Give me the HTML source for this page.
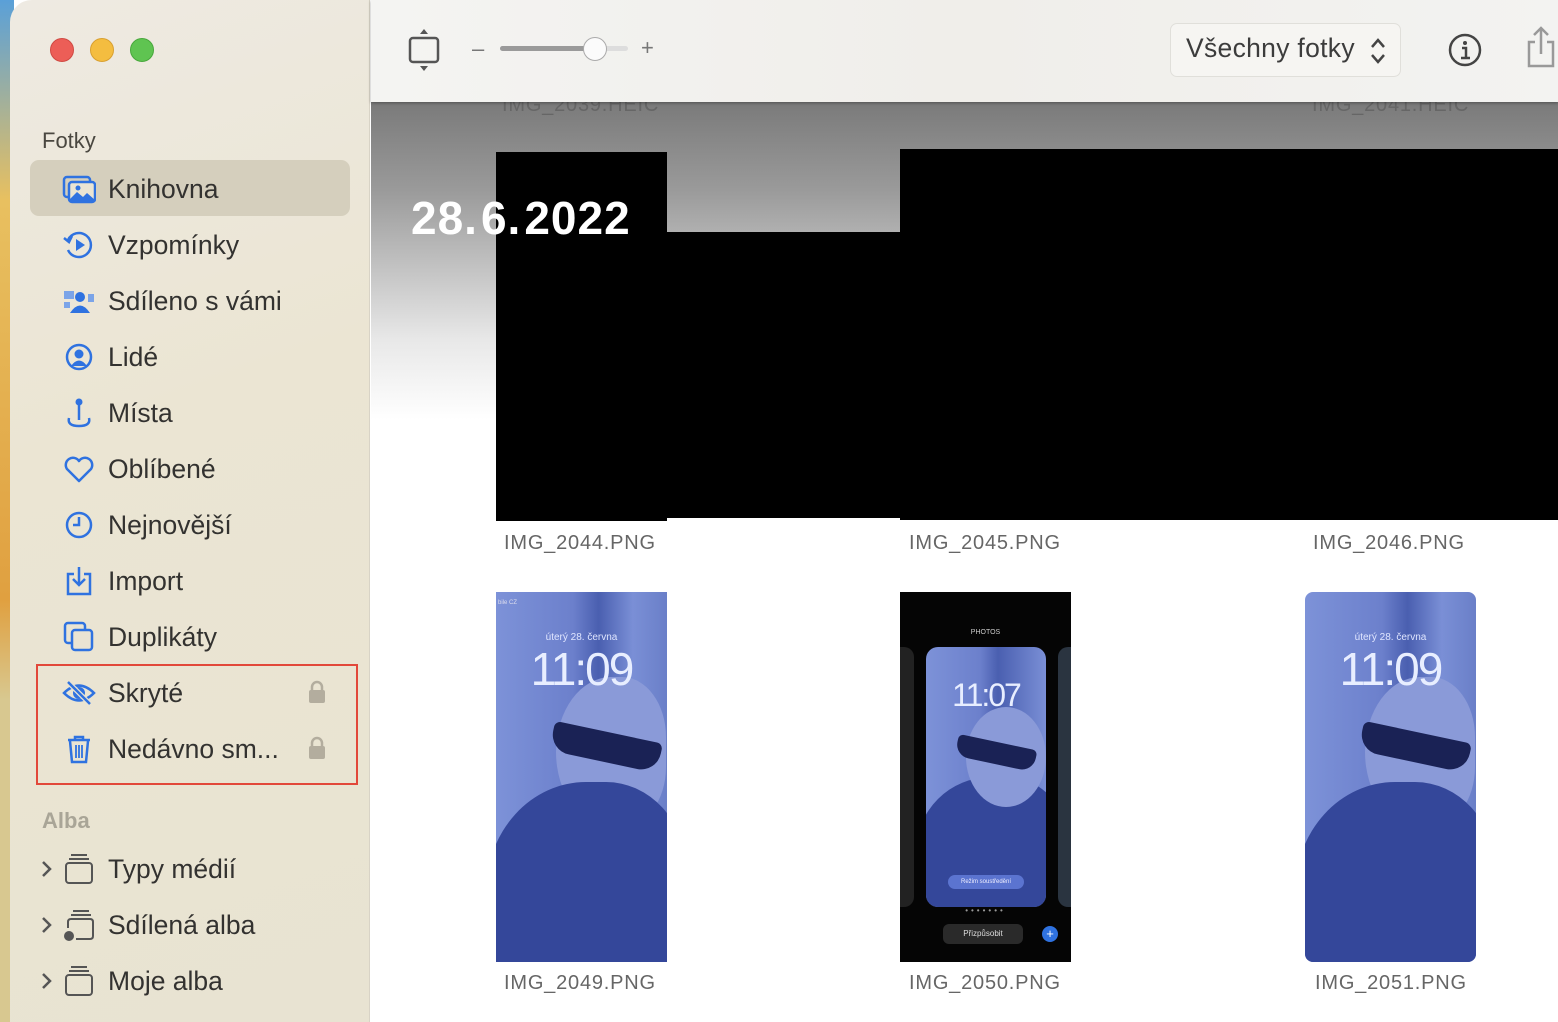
<!DOCTYPE html>
<html><head><meta charset="utf-8">
<style>
*{margin:0;padding:0;box-sizing:border-box}
body{width:1558px;height:1022px;overflow:hidden;background:#fff;font-family:"Liberation Sans",sans-serif;position:relative}
.desk{position:absolute;left:0;top:0;width:14px;height:1022px;background:linear-gradient(#5aa0d8 0,#e8c060 200px,#e0a040 600px,#d8c890 700px,#d8c890 1022px)}
.side{position:absolute;left:10px;top:0;width:360px;height:1022px;background:linear-gradient(160deg,#eeeae2,#ebe5d3 40%,#e8e3d2);border-radius:22px 0 0 0;border-right:1px solid #d8d3c6}
.dot{position:absolute;top:38px;width:24px;height:24px;border-radius:50%}
.hd{position:absolute;left:42px;font-size:22px;color:#4a4740}
.it{position:absolute;left:108px;font-size:26.5px;color:#333230;line-height:30px}
.ic{position:absolute;left:62px;width:34px;height:34px}
.sel{position:absolute;left:30px;top:160px;width:320px;height:56px;background:#d5cfbd;border-radius:9px}
.lock{position:absolute;left:308px;width:18px;height:24px}
.main{position:absolute;left:371px;top:0;width:1187px;height:1022px;background:linear-gradient(#7a7a7a 102px,#9a9a9a 190px,#b4b4b4 240px,#e8e8e8 340px,#fff 420px)}
.tb{position:absolute;left:371px;top:0;width:1187px;height:102px;background:linear-gradient(90deg,#f4f4f2,#f0eeea 50%,#f3f3f1);box-shadow:0 1px 3px rgba(0,0,0,.35)}
.blk{position:absolute;background:#000}
.lab{position:absolute;font-size:20px;color:#666;letter-spacing:.8px}
.wp{position:absolute;top:592px;width:171px;height:370px;overflow:hidden;background:linear-gradient(90deg,#7d92d8 0,#6c80cc 45%,#4a5fb0 60%,#7a8fd6 80%,#6a7fc8)}
.wp .clk{position:absolute;left:0;width:100%;text-align:center;color:#e8eeff;font-size:46px;top:50px;letter-spacing:-2px}
.wp .dt{position:absolute;left:0;width:100%;text-align:center;color:#e0e6ff;font-size:10px;top:40px}
.wp .body{position:absolute;left:-10px;top:190px;width:200px;height:220px;background:#34479a;border-radius:50% 40% 0 0}
.wp .head{position:absolute;left:60px;top:85px;width:110px;height:150px;background:#8a9ad8;border-radius:50% 40% 40% 50%}
.wp .glass{position:absolute;left:55px;top:140px;width:110px;height:30px;background:#1a2255;border-radius:6px 6px 20px 20px;transform:rotate(12deg)}
</style></head><body>
<div class="desk"></div>
<div class="side">
<div class="dot" style="left:40px;background:#ec5e57;border:1px solid #d04a43"></div>
<div class="dot" style="left:80px;background:#f4bd40;border:1px solid #d9a030"></div>
<div class="dot" style="left:120px;background:#5fc451;border:1px solid #48a83c"></div>
</div>
<div class="sel"></div>
<div class="hd" style="top:128px">Fotky</div>
<svg class="ic" style="top:172px" viewBox="0 0 34 34"><rect x="2" y="5" width="26" height="20" rx="3" fill="none" stroke="#2f72e0" stroke-width="2.5"/><rect x="7" y="10" width="26" height="20" rx="3" fill="#eae4d3" stroke="#2f72e0" stroke-width="2.5"/><path d="M7 28 L15 20 L21 25 L25 21 L33 28 L33 30 L7 30Z" fill="#2f72e0"/><circle cx="16" cy="16" r="2.5" fill="#2f72e0"/></svg>
<svg class="ic" style="top:228px" viewBox="0 0 34 34"><path d="M6 12 A12 12 0 1 1 6 22" fill="none" stroke="#2f72e0" stroke-width="2.5"/><path d="M2 10 L7 14 L10 8" fill="none" stroke="#2f72e0" stroke-width="2.5"/><path d="M14 11 L23 17 L14 23Z" fill="#2f72e0"/></svg>
<svg class="ic" style="top:284px" viewBox="0 0 34 34"><rect x="2" y="7" width="10" height="8" fill="#7ba4e8"/><rect x="2" y="18" width="6" height="6" fill="#7ba4e8"/><rect x="26" y="10" width="6" height="8" fill="#7ba4e8"/><circle cx="18" cy="13" r="5" fill="#2f72e0"/><path d="M8 29 Q18 14 28 29Z" fill="#2f72e0"/></svg>
<svg class="ic" style="top:340px" viewBox="0 0 34 34"><circle cx="17" cy="17" r="12" fill="none" stroke="#2f72e0" stroke-width="2.5"/><circle cx="17" cy="14" r="4.5" fill="#2f72e0"/><path d="M9 26 Q17 15 25 26Z" fill="#2f72e0"/></svg>
<svg class="ic" style="top:396px" viewBox="0 0 34 34"><circle cx="17" cy="6" r="3.5" fill="#2f72e0"/><path d="M17 9 V24" stroke="#2f72e0" stroke-width="2.5"/><path d="M7 22 Q5 30 17 30 Q29 30 27 22" fill="none" stroke="#2f72e0" stroke-width="2.5"/></svg>
<svg class="ic" style="top:452px" viewBox="0 0 34 34"><path d="M17 29 L5 17 A6.5 6.5 0 0 1 17 9 A6.5 6.5 0 0 1 29 17Z" fill="none" stroke="#2f72e0" stroke-width="2.5" stroke-linejoin="round"/></svg>
<svg class="ic" style="top:508px" viewBox="0 0 34 34"><circle cx="17" cy="17" r="12" fill="none" stroke="#2f72e0" stroke-width="2.5"/><path d="M17 9 V17 H11" fill="none" stroke="#2f72e0" stroke-width="2.5"/></svg>
<svg class="ic" style="top:564px" viewBox="0 0 34 34"><path d="M12 10 H6 V30 H28 V10 H22" fill="none" stroke="#2f72e0" stroke-width="2.5"/><path d="M17 3 V21 M11 15 L17 21 L23 15" fill="none" stroke="#2f72e0" stroke-width="2.5"/></svg>
<svg class="ic" style="top:620px" viewBox="0 0 34 34"><rect x="3" y="3" width="20" height="20" rx="3" fill="none" stroke="#2f72e0" stroke-width="2.5"/><rect x="10" y="10" width="20" height="20" rx="3" fill="#eae4d3" stroke="#2f72e0" stroke-width="2.5"/></svg>
<svg class="ic" style="top:676px" viewBox="0 0 34 34"><path d="M2 17 Q17 2 32 17 Q17 32 2 17Z" fill="none" stroke="#2f72e0" stroke-width="2.5"/><circle cx="17" cy="17" r="6" fill="#2f72e0"/><path d="M6 6 L28 28" stroke="#eae4d3" stroke-width="5"/><path d="M6 6 L28 28" stroke="#2f72e0" stroke-width="2.5"/></svg>
<svg class="ic" style="top:732px" viewBox="0 0 34 34"><path d="M6 8 H28 M13 8 V5 H21 V8" fill="none" stroke="#2f72e0" stroke-width="2.5"/><path d="M8 9 L10 30 H24 L26 9" fill="none" stroke="#2f72e0" stroke-width="2.5"/><path d="M14 13 V26 M17 13 V26 M20 13 V26" stroke="#2f72e0" stroke-width="1.8"/></svg>
<div class="it" style="top:174px">Knihovna</div>
<div class="it" style="top:230px">Vzpomínky</div>
<div class="it" style="top:286px">Sdíleno s vámi</div>
<div class="it" style="top:342px">Lidé</div>
<div class="it" style="top:398px">Místa</div>
<div class="it" style="top:454px">Oblíbené</div>
<div class="it" style="top:510px">Nejnovější</div>
<div class="it" style="top:566px">Import</div>
<div class="it" style="top:622px">Duplikáty</div>
<div class="it" style="top:678px">Skryté</div>
<div class="it" style="top:734px">Nedávno sm...</div>
<svg class="lock" style="top:680px" viewBox="0 0 18 24"><path d="M4 11 V7 A5 5 0 0 1 14 7 V11" fill="none" stroke="#b3ad9e" stroke-width="2.5"/><rect x="1" y="10" width="16" height="13" rx="2" fill="#b3ad9e"/></svg>
<svg class="lock" style="top:736px" viewBox="0 0 18 24"><path d="M4 11 V7 A5 5 0 0 1 14 7 V11" fill="none" stroke="#b3ad9e" stroke-width="2.5"/><rect x="1" y="10" width="16" height="13" rx="2" fill="#b3ad9e"/></svg>
<div style="position:absolute;left:36px;top:664px;width:322px;height:121px;border:2px solid #e2483a"></div>
<div class="hd" style="top:808px;color:#a9a597;font-weight:bold">Alba</div>
<svg style="position:absolute;left:40px;top:858px" width="14" height="22" viewBox="0 0 14 22"><path d="M3 4 L10 11 L3 18" fill="none" stroke="#555" stroke-width="2.5"/></svg>
<svg style="position:absolute;left:40px;top:914px" width="14" height="22" viewBox="0 0 14 22"><path d="M3 4 L10 11 L3 18" fill="none" stroke="#555" stroke-width="2.5"/></svg>
<svg style="position:absolute;left:40px;top:970px" width="14" height="22" viewBox="0 0 14 22"><path d="M3 4 L10 11 L3 18" fill="none" stroke="#555" stroke-width="2.5"/></svg>
<svg class="ic" style="top:852px" viewBox="0 0 34 34"><path d="M9 3 H25 M7 7 H27" stroke="#555" stroke-width="2"/><rect x="4" y="11" width="26" height="20" rx="3" fill="none" stroke="#555" stroke-width="2"/></svg>
<svg class="ic" style="top:908px" viewBox="0 0 34 34"><path d="M11 3 H27 M9 7 H29" stroke="#555" stroke-width="2"/><path d="M6 20 V14 Q6 11 9 11 H28 Q31 11 31 14 V28 Q31 31 28 31 H14" fill="none" stroke="#555" stroke-width="2"/><circle cx="7" cy="28" r="5" fill="#555"/></svg>
<svg class="ic" style="top:964px" viewBox="0 0 34 34"><path d="M9 3 H25 M7 7 H27" stroke="#555" stroke-width="2"/><rect x="4" y="11" width="26" height="20" rx="3" fill="none" stroke="#555" stroke-width="2"/></svg>
<div class="it" style="top:854px">Typy médií</div>
<div class="it" style="top:910px">Sdílená alba</div>
<div class="it" style="top:966px">Moje alba</div>

<div class="main"></div>
<div class="lab" style="left:502px;top:94px">IMG_2039.HEIC</div>
<div class="lab" style="left:1312px;top:94px">IMG_2041.HEIC</div>
<div class="blk" style="left:496px;top:152px;width:171px;height:369px"></div>
<div class="blk" style="left:667px;top:232px;width:234px;height:286px"></div>
<div class="blk" style="left:900px;top:149px;width:658px;height:371px"></div>
<div style="position:absolute;left:411px;top:191px;font-size:46px;font-weight:bold;color:#fff;letter-spacing:1px">28.<span style="margin-left:3px"></span>6.<span style="margin-left:3px"></span>2022</div>
<div class="lab" style="left:504px;top:532px">IMG_2044.PNG</div>
<div class="lab" style="left:909px;top:532px">IMG_2045.PNG</div>
<div class="lab" style="left:1313px;top:532px">IMG_2046.PNG</div>

<div class="wp" style="left:496px"><div class="head"></div><div class="body"></div><div class="glass"></div><div class="dt">úterý 28. června</div><div class="clk">11:09</div><div style="position:absolute;left:2px;top:8px;font-size:6px;color:#dde">bile CZ</div></div>
<div class="wp" style="left:900px;background:#050505">
 <div style="position:absolute;left:-10px;top:55px;width:24px;height:260px;border-radius:10px;background:#222"></div>
 <div style="position:absolute;left:158px;top:55px;width:24px;height:260px;border-radius:10px;background:#2a3440"></div>
 <div style="position:absolute;left:26px;top:55px;width:120px;height:260px;border-radius:12px;overflow:hidden;background:linear-gradient(90deg,#7d92d8,#6c80cc 45%,#4a5fb0 60%,#7a8fd6)">
  <div style="position:absolute;left:-10px;top:130px;width:150px;height:150px;background:#34479a;border-radius:50% 40% 0 0"></div>
  <div style="position:absolute;left:40px;top:60px;width:80px;height:100px;background:#8a9ad8;border-radius:50%"></div>
  <div style="position:absolute;left:30px;top:95px;width:80px;height:22px;background:#1a2255;border-radius:5px 5px 14px 14px;transform:rotate(12deg)"></div>
  <div style="position:absolute;left:0;width:100%;text-align:center;top:30px;color:#e8eeff;font-size:32px;letter-spacing:-2px">11:07</div>
  <div style="position:absolute;left:22px;top:228px;width:76px;height:14px;border-radius:7px;background:#5b74d0;color:#eef;font-size:6px;text-align:center;line-height:14px">Režim soustředění</div>
 </div>
 <div style="position:absolute;left:0;width:100%;text-align:center;top:37px;color:#ccc;font-size:7px">PHOTOS</div>
 <div style="position:absolute;left:0;width:100%;text-align:center;top:314px;color:#999;font-size:8px;letter-spacing:3px">•••••••</div>
 <div style="position:absolute;left:43px;top:332px;width:80px;height:20px;background:#2a2a2a;border-radius:6px;color:#ddd;font-size:8px;text-align:center;line-height:20px">Přizpůsobit</div>
 <div style="position:absolute;left:142px;top:334px;width:16px;height:16px;background:#2f72e0;border-radius:50%;color:#fff;font-size:13px;text-align:center;line-height:16px">+</div>
</div>
<div class="wp" style="left:1305px;border-radius:8px"><div class="head"></div><div class="body"></div><div class="glass"></div><div class="dt">úterý 28. června</div><div class="clk">11:09</div></div>
<div class="lab" style="left:504px;top:972px">IMG_2049.PNG</div>
<div class="lab" style="left:909px;top:972px">IMG_2050.PNG</div>
<div class="lab" style="left:1315px;top:972px">IMG_2051.PNG</div>

<div class="tb"></div>
<svg style="position:absolute;left:406px;top:28px" width="36" height="44" viewBox="0 0 36 44"><path d="M14 6 L18 1 L22 6Z M14 38 L18 43 L22 38Z" fill="#555"/><rect x="4" y="10" width="28" height="24" rx="3" fill="none" stroke="#555" stroke-width="2.5"/></svg>
<div style="position:absolute;left:472px;top:36px;font-size:22px;color:#777">–</div>
<div style="position:absolute;left:500px;top:46px;width:128px;height:5px;border-radius:3px;background:#ddd"></div>
<div style="position:absolute;left:500px;top:46px;width:95px;height:5px;border-radius:3px;background:#9a9a9a"></div>
<div style="position:absolute;left:583px;top:37px;width:24px;height:24px;border-radius:50%;background:#fbfbfb;border:1.5px solid #aaa"></div>
<div style="position:absolute;left:641px;top:35px;font-size:22px;color:#777">+</div>
<div style="position:absolute;left:1170px;top:23px;width:231px;height:54px;border:1px solid #e0dfda;border-radius:7px;background:#f6f5f2"></div>
<div style="position:absolute;left:1186px;top:33px;font-size:26.5px;color:#3c3c3c;letter-spacing:.3px">Všechny fotky</div>
<svg style="position:absolute;left:1368px;top:36px" width="20" height="30" viewBox="0 0 20 30"><path d="M4 11 L10 4 L16 11 M4 19 L10 26 L16 19" fill="none" stroke="#444" stroke-width="2.5"/></svg>
<svg style="position:absolute;left:1447px;top:32px" width="36" height="36" viewBox="0 0 36 36"><circle cx="18" cy="18" r="15" fill="none" stroke="#444" stroke-width="2.5"/><circle cx="18" cy="11" r="2" fill="#444"/><path d="M15 16 H19 V26 M14 26 H23" fill="none" stroke="#444" stroke-width="2.5"/></svg>
<svg style="position:absolute;left:1524px;top:26px" width="34" height="44" viewBox="0 0 34 44"><path d="M11 16 H5 V40 H29 V16 H23 M17 2 V28 M10 9 L17 2 L24 9" fill="none" stroke="#999" stroke-width="2.5"/></svg>
</body></html>
